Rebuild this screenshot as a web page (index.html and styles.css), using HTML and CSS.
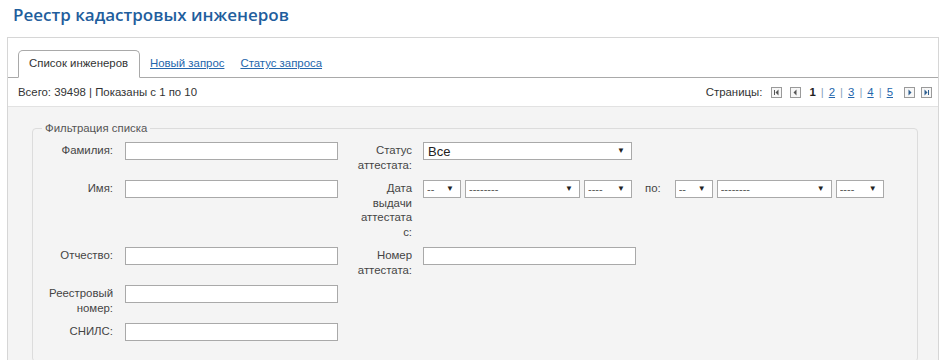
FILE: index.html
```html
<!DOCTYPE html>
<html lang="ru">
<head>
<meta charset="utf-8">
<title>Реестр кадастровых инженеров</title>
<link rel="stylesheet" href="styles.css">
</head>
<body>
<h1 class="title">Реестр кадастровых инженеров</h1>
<div class="panel">
  <div class="tabs">
    <span class="tab active">Список инженеров</span>
    <a class="tab-link first" href="#">Новый запрос</a>
    <a class="tab-link" href="#">Статус запроса</a>
  </div>
  <div class="info">
    <span class="total">Всего: 39498 | Показаны с 1 по 10</span>
    <div class="pager">
      <span class="pager-label">Страницы:</span>
      <svg class="pg-ico first-ico" width="11" height="11" viewBox="0 0 11 11"><rect x="0.5" y="0.5" width="10" height="10" fill="#f7f7f7" stroke="#9a9a9a"/><rect x="3" y="3" width="1" height="5" fill="#555"/><polygon points="7.5,2.5 7.5,8.5 4.5,5.5" fill="#555"/></svg>
      <svg class="pg-ico prev-ico" width="11" height="11" viewBox="0 0 11 11"><rect x="0.5" y="0.5" width="10" height="10" fill="#f7f7f7" stroke="#9a9a9a"/><polygon points="6.5,2.5 6.5,8.5 3.5,5.5" fill="#555"/></svg>
      <b class="cur">1</b>
      <span class="sep">|</span><a href="#">2</a>
      <span class="sep">|</span><a href="#">3</a>
      <span class="sep">|</span><a href="#">4</a>
      <span class="sep">|</span><a href="#">5</a>
      <svg class="pg-ico next-ico" width="11" height="11" viewBox="0 0 11 11"><rect x="0.5" y="0.5" width="10" height="10" fill="#f7f7f7" stroke="#9a9a9a"/><polygon points="4.5,2.5 4.5,8.5 7.5,5.5" fill="#2e5f8f"/></svg>
      <svg class="pg-ico last-ico" width="11" height="11" viewBox="0 0 11 11"><rect x="0.5" y="0.5" width="10" height="10" fill="#f7f7f7" stroke="#9a9a9a"/><polygon points="3.5,2.5 3.5,8.5 6.5,5.5" fill="#2e5f8f"/><rect x="7" y="3" width="1" height="5" fill="#2e5f8f"/></svg>
    </div>
  </div>
  <div class="filter-area">
    <fieldset class="filter">
      <legend>Фильтрация списка</legend>
      <div class="grid">
        <label class="lbl">Фамилия:</label>
        <div class="ctl"><input class="inp" type="text"></div>
        <label class="lbl lbl2">Статус аттестата:</label>
        <div class="ctl"><span class="sel w-status"><select class="big"><option>Все</option></select></span></div>

        <label class="lbl">Имя:</label>
        <div class="ctl"><input class="inp" type="text"></div>
        <label class="lbl lbl2">Дата выдачи аттестата с:</label>
        <div class="ctl dates">
          <span class="sel w-day"><select><option>--</option></select></span>
          <span class="sel w-month"><select><option>--------</option></select></span>
          <span class="sel w-year"><select><option>----</option></select></span>
          <span class="po">по:</span>
          <span class="sel w-day"><select><option>--</option></select></span>
          <span class="sel w-month"><select><option>--------</option></select></span>
          <span class="sel w-year"><select><option>----</option></select></span>
        </div>

        <label class="lbl">Отчество:</label>
        <div class="ctl"><input class="inp" type="text"></div>
        <label class="lbl lbl2">Номер аттестата:</label>
        <div class="ctl"><input class="inp" type="text"></div>

        <label class="lbl">Реестровый номер:</label>
        <div class="ctl"><input class="inp" type="text"></div>
        <span class="empty"></span>
        <span class="empty"></span>

        <label class="lbl">СНИЛС:</label>
        <div class="ctl"><input class="inp" type="text"></div>
        <span class="empty"></span>
        <span class="empty"></span>
      </div>
    </fieldset>
  </div>
</div>
</body>
</html>
```
FILE: styles.css
```css
* { box-sizing: border-box; }
html, body { margin: 0; padding: 0; background: #fff; }
body {
  font-family: "Liberation Sans", Arial, sans-serif;
  font-size: 11.4px;
  color: #333;
  overflow: hidden;
}
.title {
  margin: 0;
  padding: 3px 0 0 13px;
  height: 27px;
  font-family: "Open Sans", "Liberation Sans", sans-serif;
  font-weight: 600;
  font-size: 17px;
  line-height: 24px;
  color: #1f5e9d;
}
.panel {
  margin: 10px 0 0 7px;
  width: 932px;
  border: 1px solid #d6d6d6;
  border-bottom: 0;
  height: 330px;
}
.tabs {
  display: flex;
  align-items: flex-end;
  padding: 12px 0 0 10px;
  border-bottom: 1px solid #a9a9a9;
  height: 40px;
}
.tab {
  width: 122px;
  height: 28px;
  margin-bottom: -1px;
  padding: 5px 0 0 10px;
  border: 1px solid #a9a9a9;
  border-bottom: 1px solid #fff;
  border-radius: 5px 5px 0 0;
  background: #fff;
  line-height: 14px;
  color: #333;
  white-space: nowrap;
}
.tab-link {
  height: 28px;
  margin-bottom: -1px;
  padding-top: 6px;
  line-height: 14px;
  margin-left: 16px;
  color: #2466ac;
  text-decoration: underline;
}
.tab-link.first { margin-left: 10px; }
.info {
  display: flex;
  justify-content: space-between;
  align-items: center;
  height: 29px;
  padding: 0 6px 0 10px;
  border-bottom: 1px solid #e2e2e2;
  line-height: 28px;
}
.pager { display: flex; align-items: center; }
.pager-label { margin-right: 9px; color: #333; }
.pg-ico { display: block; }
.prev-ico { margin-left: 8px; }
.cur { margin-left: 8px; font-weight: 700; color: #222; }
.sep { padding: 0 5px; color: #8aa3bd; }
.pager a { color: #2466ac; text-decoration: underline; }
.next-ico { margin-left: 11px; }
.last-ico { margin-left: 6px; }
.filter-area {
  background: #f4f4f4;
  padding: 14px 20px 20px 24px;
  height: 260px;
}
.filter {
  margin: 0;
  padding: 7px 0 20px 0;
  border: 1px solid #dcdcdc;
  border-radius: 4px;
  min-width: 0;
}
.filter legend {
  margin-left: 9px;
  padding: 0 3px;
  line-height: 14px;
  color: #555;
}
.grid {
  display: grid;
  grid-template-columns: 92px 232px 66px 1fr;
  row-gap: 8px;
  align-items: start;
}
.lbl {
  padding: 1px 12px 0 0;
  text-align: right;
  line-height: 14.5px;
  color: #444;
}
.lbl2 { padding-right: 11px; }
.inp {
  display: block;
  width: 213px;
  height: 18px;
  margin: 0;
  padding: 0 3px;
  border: 1px solid #a9a9a9;
  background: #fff;
  font: 12px "Liberation Sans", Arial, sans-serif;
  outline: none;
}
.sel {
  position: relative;
  display: block;
  height: 18px;
  background: #fff;
}
.sel select {
  -webkit-appearance: none;
  appearance: none;
  display: block;
  width: 100%;
  height: 18px;
  margin: 0;
  padding: 0 0 0 3px;
  border: 1px solid #a9a9a9;
  border-radius: 0;
  background: #fff;
  font: 11px "Liberation Sans", Arial, sans-serif;
  color: #555;
  outline: none;
}
.sel select.big { font-size: 13px; color: #222; padding-left: 4px; }
.sel::after {
  content: "▼";
  position: absolute;
  right: 7px;
  top: 4px;
  font-size: 8px;
  line-height: 10px;
  color: #222;
  pointer-events: none;
}
.w-status { width: 209px; }
.w-day { width: 38px; }
.w-month { width: 115px; }
.w-year { width: 48px; }
.dates { display: flex; align-items: flex-start; gap: 4px; }
.po {
  margin: 0 10px 0 9px;
  line-height: 16px;
  color: #444;
}
```
